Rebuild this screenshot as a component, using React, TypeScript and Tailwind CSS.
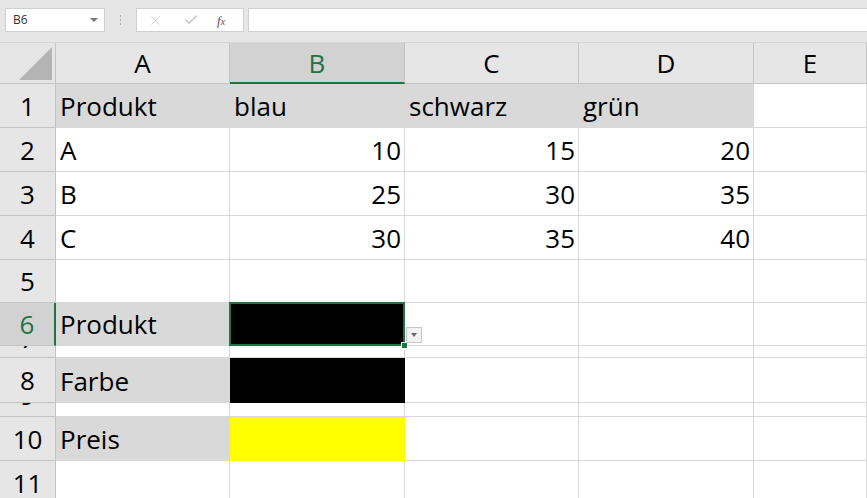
import React from 'react';
import { X, Check } from 'lucide-react';

const cols = ['A', 'B', 'C', 'D', 'E'];
const colWidths = [174, 175, 174, 175, 113];

type Row = {
    n: number;
    h: number;
    cells: { text?: string; right?: boolean; bg?: string }[];
    tiny?: boolean;
};

const gray = 'bg-[#d9d9d9] border-[#d9d9d9]';

const rows: Row[] = [
    { n: 1, h: 44, cells: [{ text: 'Produkt', bg: gray }, { text: 'blau', bg: gray }, { text: 'schwarz', bg: gray }, { text: 'grün', bg: gray }, {}] },
    { n: 2, h: 44, cells: [{ text: 'A' }, { text: '10', right: true }, { text: '15', right: true }, { text: '20', right: true }, {}] },
    { n: 3, h: 44, cells: [{ text: 'B' }, { text: '25', right: true }, { text: '30', right: true }, { text: '35', right: true }, {}] },
    { n: 4, h: 44, cells: [{ text: 'C' }, { text: '30', right: true }, { text: '35', right: true }, { text: '40', right: true }, {}] },
    { n: 5, h: 43, cells: [{}, {}, {}, {}, {}] },
    { n: 6, h: 43, cells: [{ text: 'Produkt', bg: gray }, { bg: 'bg-black border-black' }, {}, {}, {}] },
    { n: 7, h: 12, tiny: true, cells: [{}, {}, {}, {}, {}] },
    { n: 8, h: 45, cells: [{ text: 'Farbe', bg: gray }, { bg: 'bg-black border-black' }, {}, {}, {}] },
    { n: 9, h: 14, tiny: true, cells: [{}, {}, {}, {}, {}] },
    { n: 10, h: 44, cells: [{ text: 'Preis', bg: gray }, { bg: 'bg-[#ffff00] border-[#ffff00]' }, {}, {}, {}] },
    { n: 11, h: 44, cells: [{}, {}, {}, {}, {}] },
];

const font = { fontFamily: '"Open Sans", "Noto Sans", sans-serif' };

function TopBar() {
    return (
        <div className="h-[43px] bg-[#e6e6e6] border-b border-[#d6d6d6] flex items-start pt-[8px] pl-[5px]">
            {/* name box */}
            <div className="w-[100px] h-[24px] bg-white border border-[#d0d0d0] flex items-center justify-between pl-[7px] pr-[6px]">
                <span className="text-[12px] text-[#333]" style={font}>B6</span>
                <span className="w-0 h-0 border-l-[4px] border-r-[4px] border-t-[4px] border-l-transparent border-r-transparent border-t-[#777]" />
            </div>
            {/* separator dots */}
            <div className="w-[31px] h-[24px] flex flex-col items-center justify-center gap-[2px]">
                <span className="w-[1px] h-[2px] bg-[#aaa]" />
                <span className="w-[1px] h-[2px] bg-[#aaa]" />
                <span className="w-[1px] h-[2px] bg-[#aaa]" />
            </div>
            {/* formula buttons */}
            <div className="w-[108px] h-[24px] bg-white border border-[#d0d0d0] flex items-center pl-[11px]">
                <X size={15} strokeWidth={1.3} color="#c4c4c4" />
                <Check size={16} strokeWidth={2} color="#c4c4c4" className="ml-[20px]" />
                <span className="ml-[18px] text-[13px] text-[#555] italic leading-none" style={{ fontFamily: '"Liberation Serif", serif' }}>
                    f<span className="text-[10px]">x</span>
                </span>
            </div>
            {/* formula input */}
            <div className="ml-[4px] flex-1 h-[24px] bg-white border border-[#d0d0d0] border-r-0" />
        </div>
    );
}

function HeaderRow() {
    return (
        <div className="flex h-[41px] bg-[#e6e6e6]">
            <div className="w-[56px] shrink-0 border-r border-b border-[#c4c4c4] relative">
                <svg className="absolute right-[3px] bottom-[3px]" width="33" height="33" viewBox="0 0 33 33">
                    <polygon points="33,0 33,33 0,33" fill="#b4b4b4" />
                </svg>
            </div>
            {cols.map((c, i) => {
                const active = c === 'B';
                return (
                    <div
                        key={c}
                        style={{ width: colWidths[i], ...font }}
                        className={`shrink-0 flex items-center justify-center text-[26px] leading-none border-r ${
                            active
                                ? 'bg-[#d2d2d2] text-[#217346] border-b-2 border-b-[#217346] border-r-[#c4c4c4]'
                                : 'text-black border-b border-[#c4c4c4]'
                        }`}
                    >
                        {c}
                    </div>
                );
            })}
        </div>
    );
}

function RowHeader({ row }: { row: Row }) {
    const active = row.n === 6;
    return (
        <div
            style={{ height: row.h, ...font }}
            className={`w-[56px] shrink-0 overflow-hidden border-b border-[#c4c4c4] ${
                active ? 'bg-[#d2d2d2] text-[#217346] border-r-2 border-r-[#217346]' : 'bg-[#e6e6e6] text-black border-r'
            }`}
        >
            <div className={`h-[44px] flex items-center justify-center text-[26px] leading-none ${row.tiny ? 'mt-[-30px]' : row.h < 44 ? 'mt-[-1px]' : ''}`}>
                {row.n}
            </div>
        </div>
    );
}

export default function App() {
    return (
        <div className="w-[867px] h-[498px] overflow-hidden bg-white">
            <TopBar />
            <HeaderRow />
            {rows.map((row) => (
                <div key={row.n} className="flex" style={{ height: row.h }}>
                    <RowHeader row={row} />
                    {row.cells.map((cell, i) => {
                        const selected = row.n === 6 && i === 1;
                        return (
                            <div
                                key={i}
                                style={{ width: colWidths[i], ...font }}
                                className={`shrink-0 relative flex items-end text-[26px] leading-[26px] text-black border-r border-b pb-[8px] ${
                                    cell.bg ?? 'border-[#d9d9d9]'
                                } ${cell.right ? 'justify-end pr-[3px]' : 'pl-[4px]'} ${selected ? 'z-10' : ''}`}
                            >
                                {cell.text}
                                {selected && (
                                    <>
                                        <div className="absolute -left-[1px] -top-[1px] right-[-1px] bottom-[-1px] border-2 border-[#217346]" />
                                        <div className="absolute right-[-4px] bottom-[-4px] w-[7px] h-[7px] bg-[#217346] border border-white" />
                                        <div className="absolute right-[-18px] bottom-[2px] w-[16px] h-[16px] bg-[#f2f2f2] border border-[#c8c8c8] flex items-center justify-center">
                                            <span className="w-0 h-0 border-l-[3.5px] border-r-[3.5px] border-t-[4px] border-l-transparent border-r-transparent border-t-[#666]" />
                                        </div>
                                    </>
                                )}
                            </div>
                        );
                    })}
                </div>
            ))}
        </div>
    );
}
